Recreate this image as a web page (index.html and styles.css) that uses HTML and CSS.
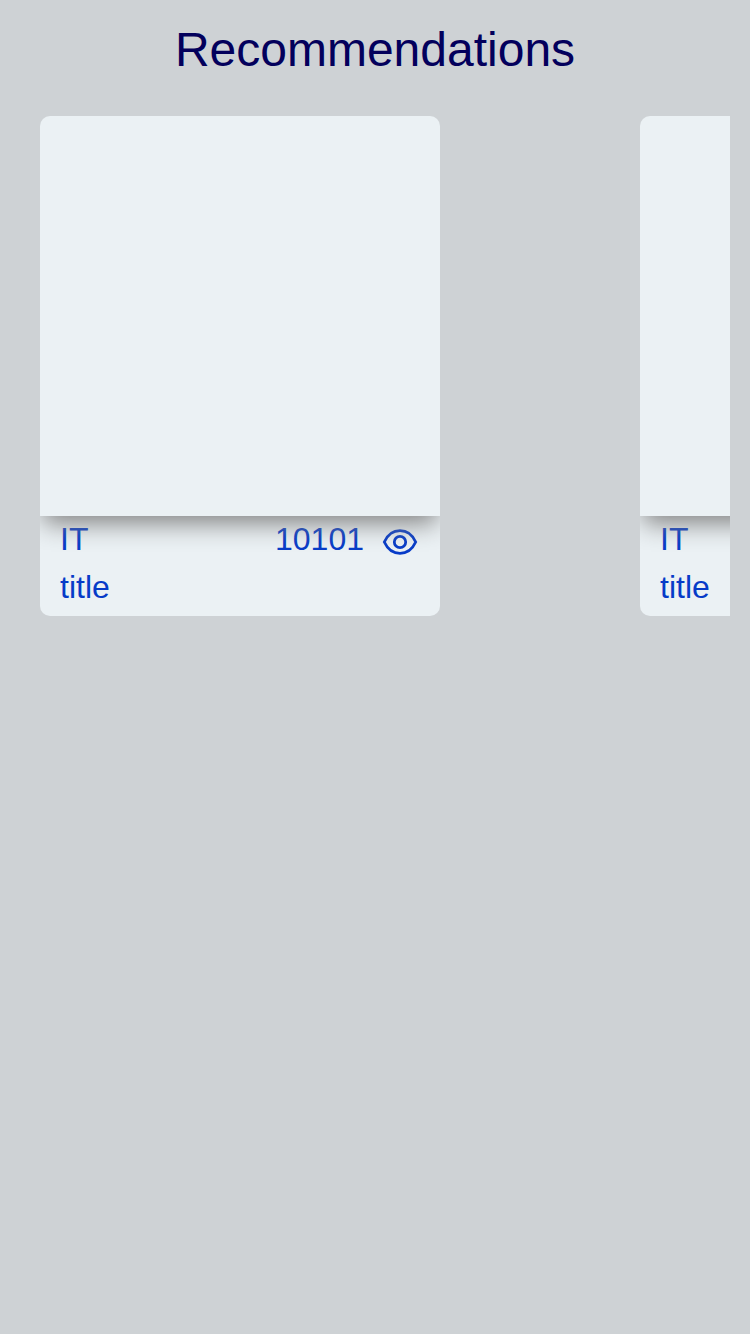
FILE: index.html
```html
<!DOCTYPE html>
<html lang="en">
<head>
<meta charset="utf-8">
<title>Recommendations</title>
<link rel="stylesheet" href="styles.css">
</head>
<body>
<h1 class="heading">Recommendations</h1>
<main class="carousel">
  <article class="card">
    <div class="card-image"></div>
    <div class="card-info">
      <div class="card-row">
        <span>IT</span>
        <span class="views">10101
          <svg class="eye" viewBox="0 0 40 40" aria-hidden="true"><path d="M4.300 20C7.700 12.600 13 8.700 20 8.700S32.300 12.600 35.700 20C32.300 27.400 27 31.300 20 31.300S7.700 27.400 4.300 20Z"/><circle cx="20" cy="20" r="5.700"/></svg>
        </span>
      </div>
      <div class="card-title">title</div>
    </div>
  </article>
  <article class="card">
    <div class="card-image"></div>
    <div class="card-info">
      <div class="card-row"><span>IT</span></div>
      <div class="card-title">title</div>
    </div>
  </article>
</main>
</body>
</html>
```
FILE: styles.css
```css
* {
  box-sizing: border-box;
}

body {
  margin: 0;
  min-height: 100vh;
  background: #ced2d5;
  font-family: "Liberation Sans", Arial, sans-serif;
}

.heading {
  margin: 0;
  padding-top: 20px;
  height: 96px;
  color: #03005c;
  font-size: 48px;
  font-weight: 400;
  line-height: 60px;
  text-align: center;
}

.carousel {
  display: flex;
  gap: 200px;
  margin: 0 20px;
  padding: 20px;
  overflow: hidden;
}

.card {
  flex: 0 0 400px;
  height: 500px;
  border-radius: 10px;
  background: #ebf1f4;
  color: #063bc8;
  font-size: 32px;
  overflow: hidden;
}

.card-image {
  height: 400px;
}

.card-info {
  position: relative;
  height: 100px;
  padding: 0 20px;
  overflow: hidden;
}

.card-info::before {
  content: "";
  position: absolute;
  left: 0;
  top: -400px;
  width: 400px;
  height: 400px;
  box-shadow: 0 10px 24px -3px gray;
}

.card-row {
  display: flex;
  justify-content: space-between;
  height: 48px;
  line-height: 46px;
}

.views {
  display: flex;
  gap: 16px;
}

.eye {
  width: 40px;
  height: 40px;
  margin-top: 6px;
  fill: none;
  stroke: currentColor;
  stroke-width: 2.8;
}

.card-title {
  line-height: 46px;
}
```
